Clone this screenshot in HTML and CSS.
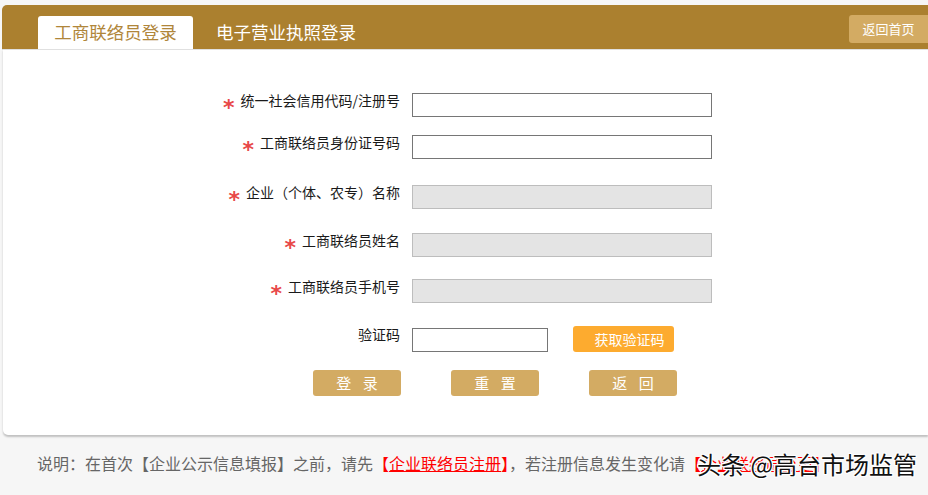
FILE: index.html
```html
<!DOCTYPE html>
<html lang="zh-CN">
<head>
<meta charset="utf-8">
<title>工商联络员登录</title>
<link rel="stylesheet" href="styles.css">
</head>
<body>
<div class="wrap">
  <div class="topbar">
    <div class="tab tab-active">工商联络员登录</div>
    <div class="tab">电子营业执照登录</div>
    <div class="home-btn">返回首页</div>
  </div>
  <div class="panel">
    <div class="row">
      <label class="label"><span class="star">*</span>统一社会信用代码/注册号</label>
      <div class="field"><input class="input" type="text"></div>
    </div>
    <div class="row">
      <label class="label"><span class="star">*</span>工商联络员身份证号码</label>
      <div class="field"><input class="input" type="text"></div>
    </div>
    <div class="row">
      <label class="label"><span class="star">*</span>企业（个体、农专）名称</label>
      <div class="field"><input class="input input-disabled" type="text" disabled></div>
    </div>
    <div class="row">
      <label class="label"><span class="star">*</span>工商联络员姓名</label>
      <div class="field"><input class="input input-disabled" type="text" disabled></div>
    </div>
    <div class="row">
      <label class="label"><span class="star">*</span>工商联络员手机号</label>
      <div class="field"><input class="input input-disabled" type="text" disabled></div>
    </div>
    <div class="row row-code">
      <label class="label">验证码</label>
      <div class="field field-code">
        <input class="input input-code" type="text">
        <button class="btn-code" type="button">获取验证码</button>
      </div>
    </div>
    <div class="actions">
      <button class="btn" type="button">登 录</button>
      <button class="btn" type="button">重 置</button>
      <button class="btn" type="button">返 回</button>
    </div>
  </div>
</div>
<p class="note">说明：在首次【企业公示信息填报】之前，请先<span class="red">【<u>企业联络员注册</u>】</span>，若注册信息发生变化请<span class="red">【<u>企业联络员变更</u>】</span></p>
<div class="watermark">头条 @高台市场监管</div>
</body>
</html>
```
FILE: styles.css
```css
html, body {
  margin: 0;
  padding: 0;
}
body {
  background: #f6f6f6;
  font-family: "Noto Sans CJK SC", "Noto Sans", sans-serif;
  width: 928px;
  height: 495px;
  overflow: hidden;
  position: relative;
}
.wrap {
  margin: 5px 0 0 2px;
}
.topbar {
  height: 44px;
  background: #ab802f;
  border-radius: 5px 0 0 0;
  display: flex;
  align-items: flex-end;
  padding-left: 36px;
  box-shadow: 0 1px 0 rgba(0,0,0,0.12);
  position: relative;
  z-index: 1;
}
.tab {
  height: 33px;
  line-height: 31px;
  font-size: 17.5px;
  color: #fff;
  padding-left: 23px;
  white-space: nowrap;
}
.tab-active {
  width: 155px;
  box-sizing: border-box;
  padding-left: 0;
  text-align: center;
  background: #fff;
  color: #b0863a;
  border-radius: 3px 3px 0 0;
}
.home-btn {
  margin-left: auto;
  align-self: flex-start;
  margin-top: 10px;
  width: 79px;
  height: 28px;
  line-height: 28px;
  text-align: center;
  font-size: 13px;
  color: #fff;
  background: #d3ab63;
  border-radius: 3px 0 0 3px;
}
.panel {
  margin-left: 1px;
  height: 342px;
  padding-top: 44px;
  background: #fff;
  border-radius: 0 0 0 5px;
  box-shadow: 0 2px 2px rgba(0,0,0,0.22);
}
.row {
  display: flex;
  align-items: flex-start;
}
.row:nth-child(2) { margin-top: 18px; }
.row:nth-child(3) { margin-top: 26px; }
.row:nth-child(4) { margin-top: 24px; }
.row:nth-child(5) { margin-top: 22px; }
.row-code { margin-top: 24px; }
.label {
  width: 397px;
  flex: none;
  text-align: right;
  font-size: 14px;
  line-height: 18px;
  color: #1a1a1a;
  margin-top: -2px;
  white-space: nowrap;
}
.star {
  display: inline-block;
  color: #e84848;
  font-family: "DejaVu Sans", sans-serif;
  font-weight: bold;
  font-size: 22px;
  line-height: 18px;
  vertical-align: top;
  position: relative;
  top: 8px;
  margin-right: 6px;
}
.field {
  margin-left: 12px;
  display: flex;
  align-items: center;
}
.input {
  width: 300px;
  height: 24px;
  box-sizing: border-box;
  border: 1px solid #767676;
  background: #fff;
  margin: 0;
  padding: 0 4px;
  font: inherit;
  font-size: 14px;
}
.input-disabled {
  background: #e4e4e4;
  border-color: #bdbdbd;
}
.input-code {
  width: 136px;
  margin-top: 1px;
}
.btn-code {
  margin-left: 25px;
  width: 101px;
  height: 26px;
  border: none;
  border-radius: 3px;
  background: #fdab2f;
  color: #fff;
  font: inherit;
  font-size: 14px;
  line-height: 26px;
  padding: 0 0 0 12px;
  margin-top: -1px;
}
.actions {
  display: flex;
  gap: 50px;
  margin-top: 18px;
  padding-left: 310px;
}
.btn {
  width: 88px;
  height: 26px;
  border: none;
  border-radius: 3px;
  background: #d3ab63;
  color: #fff;
  font: inherit;
  font-size: 15px;
  line-height: 26px;
  padding: 0 0 0 4px;
  letter-spacing: 4px;
}
.note {
  margin: 18px 0 0 0;
  padding-left: 37px;
  font-size: 16px;
  line-height: 20px;
  color: #666;
  white-space: nowrap;
}
.red {
  color: #ff0000;
}
.watermark {
  position: absolute;
  left: 697px;
  top: 449px;
  font-size: 24px;
  line-height: 30px;
  color: #111;
  white-space: nowrap;
  text-shadow: 1px 0 0 #fff, -1px 0 0 #fff, 0 1px 0 #fff, 0 -1px 0 #fff, 1px 1px 0 #fff, -1px -1px 0 #fff, 1px -1px 0 #fff, -1px 1px 0 #fff;
}
```
